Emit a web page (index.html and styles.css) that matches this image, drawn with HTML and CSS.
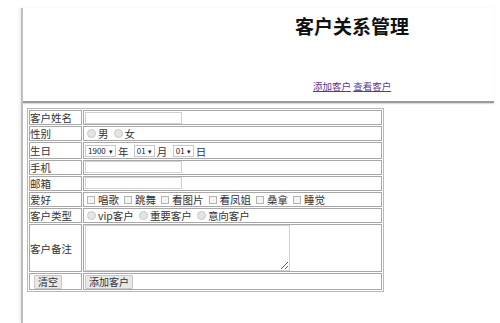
FILE: index.html
```html
<!DOCTYPE html>
<html lang="zh">
<head>
<meta charset="utf-8">
<title>客户关系管理</title>
<link rel="stylesheet" href="styles.css">
</head>
<body>
<div class="page">
  <div class="frame">
    <div class="top">
      <h1 class="title">客户关系管理</h1>
      <div class="nav"><a href="#" class="link">添加客户</a> <a href="#" class="link">查看客户</a></div>
    </div>
    <div class="main">
      <table class="form">
        <tr><td class="lbl">客户姓名</td><td class="val"><input class="txt" type="text"></td></tr>
        <tr><td class="lbl">性别</td><td class="val"><span class="opt"><span class="radio"></span>男</span><span class="opt"><span class="radio"></span>女</span></td></tr>
        <tr><td class="lbl">生日</td><td class="val">
          <span class="sel sel-year">1900<span class="arrow">▾</span></span><span class="unit">年</span>
          <span class="sel">01<span class="arrow">▾</span></span><span class="unit">月</span>
          <span class="sel">01<span class="arrow">▾</span></span><span class="unit">日</span>
        </td></tr>
        <tr><td class="lbl">手机</td><td class="val"><input class="txt" type="text"></td></tr>
        <tr><td class="lbl">邮箱</td><td class="val"><input class="txt" type="text"></td></tr>
        <tr><td class="lbl">爱好</td><td class="val">
          <span class="opt"><span class="check"></span>唱歌</span><span class="opt"><span class="check"></span>跳舞</span><span class="opt"><span class="check"></span>看图片</span><span class="opt"><span class="check"></span>看凤姐</span><span class="opt"><span class="check"></span>桑拿</span><span class="opt"><span class="check"></span>睡觉</span>
        </td></tr>
        <tr><td class="lbl">客户类型</td><td class="val">
          <span class="opt"><span class="radio"></span>vip客户</span><span class="opt"><span class="radio"></span>重要客户</span><span class="opt"><span class="radio"></span>意向客户</span>
        </td></tr>
        <tr class="note-row"><td class="lbl">客户备注</td><td class="val"><textarea class="area"></textarea></td></tr>
        <tr class="btn-row"><td class="lbl"><button class="btn btn-clear" type="button">清空</button></td><td class="val"><button class="btn" type="button">添加客户</button></td></tr>
      </table>
    </div>
  </div>
</div>
</body>
</html>
```

FILE: styles.css
```css
html, body {
  margin: 0;
  padding: 0;
  background: #ffffff;
}
body {
  font-family: "Noto Sans CJK SC", "Noto Sans", sans-serif;
  color: #333;
}
.page {
  padding: 8px 0 0 21px;
  height: 315px;
  overflow: hidden;
}
.frame {
  width: 471px;
  height: 315px;
  border-left: 2px solid #bdbdbd;
  box-shadow: -2px 0 2px #f0f0f0;
}
.top {
  height: 95px;
  border-bottom: 2px solid #9a9a9a;
  box-shadow: 0 1px 1px #dcdcdc;
  box-sizing: border-box;
  padding-top: 7px;
}
.title {
  margin: 0;
  padding-left: 272px;
  font-size: 19px;
  line-height: 22px;
  font-weight: bold;
  color: #111;
}
.nav {
  margin-top: 43px;
  padding-left: 290px;
  font-size: 9.5px;
  line-height: 12px;
}
.link {
  color: #5a3a8e;
  text-decoration: underline;
}
.main {
  padding: 5px 0 0 4px;
}
.form {
  border: 1px solid #b8b8b8;
  border-spacing: 1px;
  font-size: 10.5px;
  line-height: 13px;
}
.form td {
  border: 1px solid #a8a8a8;
  padding: 0;
  height: 13px;
  white-space: nowrap;
}
.lbl {
  width: 51px;
  color: #333;
}
.val {
  width: 297px;
  color: #333;
}
.txt {
  display: block;
  box-sizing: border-box;
  width: 97px;
  height: 12px;
  margin: 0 0 0 1px;
  padding: 0;
  border: 1px solid #d0d0d0;
  background: #fff;
}
.opt {
  display: inline-flex;
  align-items: center;
  margin-left: 3px;
  margin-right: 2px;
}
.radio {
  display: inline-block;
  width: 7px;
  height: 7px;
  border-radius: 50%;
  background: #e4e4e4;
  border: 1px solid #c8c8c8;
  margin-right: 2px;
}
.check {
  display: inline-block;
  width: 6px;
  height: 6px;
  background: #f4f4f4;
  border: 1px solid #b4b4b4;
  margin-right: 3px;
}
.sel {
  position: relative;
  display: inline-block;
  box-sizing: border-box;
  width: 21px;
  height: 12px;
  line-height: 10px;
  margin-left: 1px;
  padding-left: 2px;
  border: 1px solid #c8c8c8;
  font-size: 8px;
  vertical-align: middle;
  color: #222;
}
.sel-year {
  width: 31px;
}
.arrow {
  position: absolute;
  right: 2px;
  top: 0;
  font-size: 7px;
}
.unit {
  margin-left: 2px;
  margin-right: 2px;
  vertical-align: middle;
}
.note-row td {
  height: 45px;
}
.area {
  display: block;
  box-sizing: border-box;
  width: 205px;
  height: 46px;
  margin: 0 0 0 1px;
  border: 1px solid #d0d0d0;
  padding: 0;
  resize: both;
}
.btn-row td {
  height: 15px;
}
.btn {
  display: block;
  height: 14px;
  margin-left: 1px;
  padding: 0 3px;
  font-family: "Noto Sans CJK SC", sans-serif;
  font-size: 10px;
  line-height: 12px;
  color: #333;
  background: #e8e8e8;
  border: 1px solid #c8c8c8;
  border-radius: 1px;
}
.btn-clear {
  margin-left: 4px;
}
```
